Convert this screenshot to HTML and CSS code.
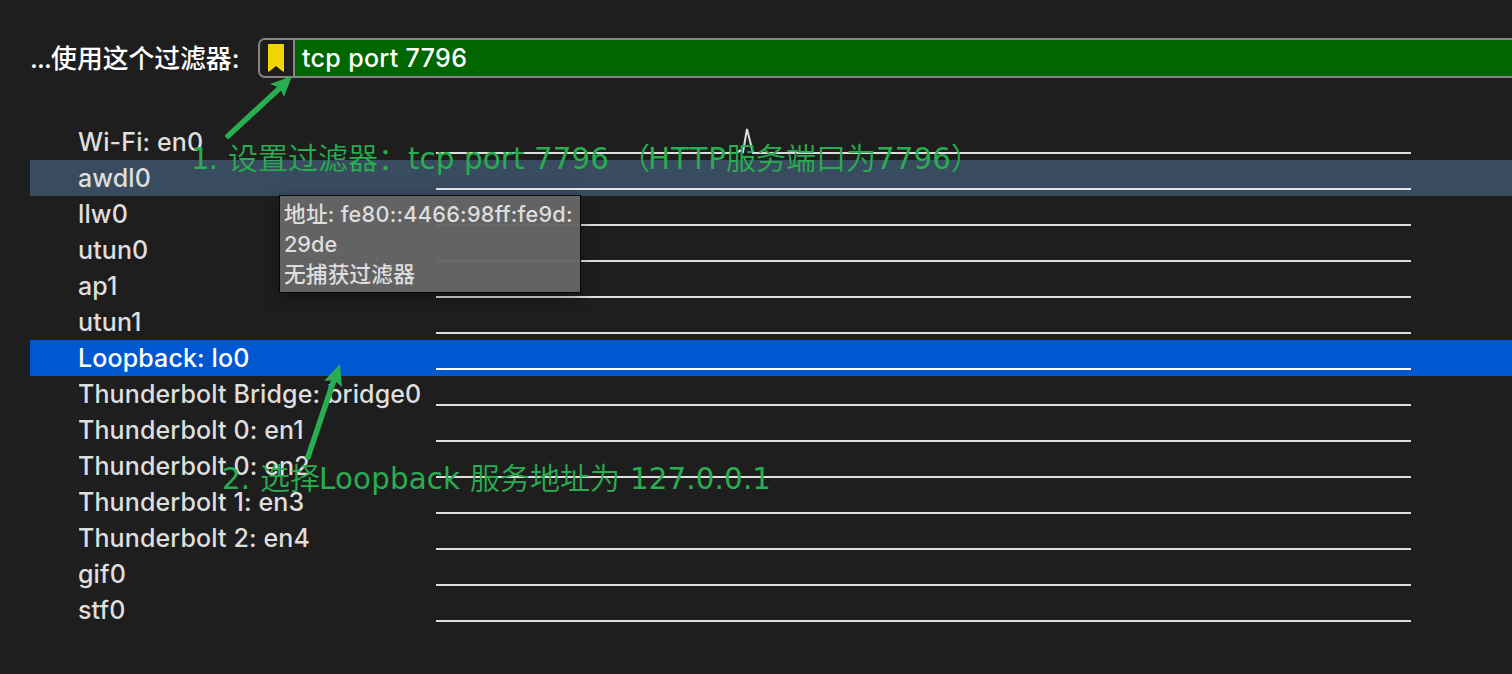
FILE: index.html
```html
<!DOCTYPE html>
<html lang="zh-CN">
<head>
<meta charset="utf-8">
<title>Capture</title>
<link rel="stylesheet" href="styles.css">
</head>
<body>
<main class="window">
  <header class="filter">
    <span class="filter-label"><span class="dots">...</span>使用这个过滤器:</span>
    <div class="filter-box">
      <span class="bookmark"><svg width="18" height="30" viewBox="0 0 18 30"><path d="M1 2Q1 1 2 1H16Q17 1 17 2V27.5Q17 29.5 15.5 28.3L9 23L2.5 28.3Q1 29.5 1 27.5Z" fill="#f0d500"/></svg></span>
      <span class="filter-text">tcp port 7796</span>
    </div>
  </header>
  <section class="list">
    <div class="row"><span class="name">Wi-Fi: en0</span><svg class="spark" width="975" height="36" viewBox="0 0 975 36"><path d="M0 29H301L304 26.5L307 28L311 5L317 29H975"/></svg></div>
    <div class="row hover"><span class="name">awdl0</span><i class="line"></i></div>
    <div class="row"><span class="name">llw0</span><i class="line"></i></div>
    <div class="row"><span class="name">utun0</span><i class="line"></i></div>
    <div class="row"><span class="name">ap1</span><i class="line"></i></div>
    <div class="row"><span class="name">utun1</span><i class="line"></i></div>
    <div class="row selected"><span class="name">Loopback: lo0</span><i class="line"></i></div>
    <div class="row"><span class="name">Thunderbolt Bridge: bridge0</span><i class="line"></i></div>
    <div class="row"><span class="name">Thunderbolt 0: en1</span><i class="line"></i></div>
    <div class="row"><span class="name">Thunderbolt 0: en2</span><i class="line"></i></div>
    <div class="row"><span class="name">Thunderbolt 1: en3</span><i class="line"></i></div>
    <div class="row"><span class="name">Thunderbolt 2: en4</span><i class="line"></i></div>
    <div class="row"><span class="name">gif0</span><i class="line"></i></div>
    <div class="row"><span class="name">stf0</span><i class="line"></i></div>
  </section>
  <div class="tooltip"><div class="address">地址: fe80::4466:98ff:fe9d:</div><div>29de</div><div class="capture">无捕获过滤器</div></div>
  <svg class="notes" width="1512" height="674" viewBox="0 0 1512 674">
    <path class="shaft" d="M228 136L281 87M308 457L334 380"/>
    <path d="M292 76L270 84L280 88L284 97ZM340 364L324 381L334 380L342 387Z"/>
    <text y="169"><tspan class="latin" x="191" textLength="27">1.</tspan><tspan x="228" textLength="180">设置过滤器：</tspan><tspan class="latin" x="408" textLength="201">tcp port 7796</tspan><tspan x="620">（</tspan><tspan class="latin" x="648" textLength="78">HTTP</tspan><tspan x="726" textLength="150">服务端口为</tspan><tspan class="latin" x="876" textLength="75">7796</tspan><tspan x="951">）</tspan></text>
    <text y="489"><tspan class="latin" x="222" textLength="28">2.</tspan><tspan x="260" textLength="60">选择</tspan><tspan class="latin" x="319" textLength="141">Loopback</tspan><tspan x="470" textLength="150">服务地址为</tspan><tspan class="latin" x="630" textLength="141">127.0.0.1</tspan></text>
  </svg>
</main>
</body>
</html>
```
FILE: styles.css
```css
body { margin: 0; background: #1e1e1e; }
.window { position: relative; width: 1512px; height: 674px; overflow: hidden; background: #1e1e1e; color: #dedede; font-family: Inter, "Noto Sans CJK SC", sans-serif; font-size: 25px; box-sizing: border-box; padding: 38px 0 0 30px; white-space: nowrap; }
.filter { display: flex; height: 40px; align-items: center; color: #fff; }
.filter-label { width: 228px; font-weight: 500; font-size: 25.8px; line-height: 40px; padding-top: 2px; }
.dots { letter-spacing: -0.8px; }
.filter-box { flex: 1; display: flex; height: 36px; border: 2px solid #858585; border-right: 0; border-radius: 7px 0 0 7px; background: #006600; overflow: hidden; }
.bookmark { width: 33px; background: #1e1e1e; border-right: 2px solid #858585; display: flex; align-items: center; }
.bookmark svg { margin-left: 7px; }
.filter-text { padding-left: 7px; line-height: 36px; letter-spacing: 0.33px; font-weight: 500; }
.list { margin-top: 46px; }
.row { display: flex; height: 36px; padding-left: 48px; line-height: 36px; }
.name { width: 358px; font-weight: 450; letter-spacing: 0.12px; }
.line { width: 975px; height: 2px; margin-top: 28px; background: #dedede; }
.spark { fill: none; stroke: #dedede; stroke-width: 2; }
.hover { background: #394b5f; }
.hover .line { background: #e4e8eb; }
.selected { background: #0058d1; color: #fff; }
.selected .line { background: #fff; }
.tooltip { position: absolute; left: 279px; top: 195px; width: 300px; height: 93px; padding-top: 3px; border: 1px solid #080808; background: rgba(102, 102, 102, .96); box-shadow: 0 5px 16px rgba(0, 0, 0, .35); font-size: 21.7px; line-height: 30px; font-weight: 500; text-indent: 4px; }
.address { letter-spacing: 0.24px; }
.capture { letter-spacing: 0.15px; }
.notes { position: absolute; left: 0; top: 0; fill: #28ad50; font-size: 30px; }
.notes text { font-family: "Noto Sans CJK SC", sans-serif; font-weight: 350; }
.notes .latin { font-family: "DejaVu Sans", sans-serif; font-size: 29.3px; font-weight: 400; }
.shaft { stroke: #28ad50; stroke-width: 5.5; stroke-linecap: round; fill: none; }
```
